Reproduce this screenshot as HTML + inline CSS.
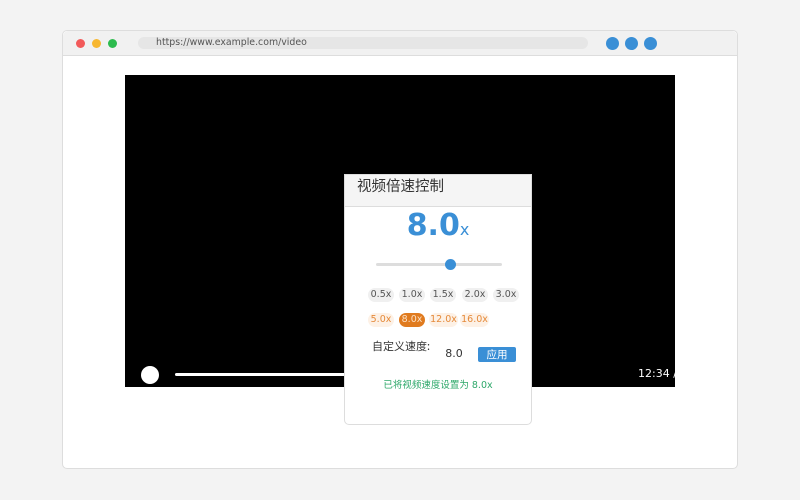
<!DOCTYPE html><html><head><meta charset="utf-8"><style>
*{margin:0;padding:0;box-sizing:border-box}
body{width:800px;height:500px;background:#f3f3f3;position:relative;font-family:"DejaVu Sans","Liberation Sans","Noto Sans CJK SC",sans-serif;overflow:hidden}
.a{position:absolute}
.btn{position:absolute;height:14px;line-height:14px;font-size:9.5px;border-radius:7px;text-align:center;background:#f0f0f0;color:#555;width:26px}
.o{background:#fdf1e6;color:#e58a3a}
</style></head><body>
<div class="a" style="left:62px;top:30px;width:676px;height:439px;background:#fff;border:1px solid #ddd;border-radius:5px"></div>
<div class="a" style="left:63px;top:31px;width:674px;height:25px;background:#f1f1f1;border-bottom:1px solid #ddd;border-radius:5px 5px 0 0"></div>
<div class="a" style="left:76px;top:39px;width:9px;height:9px;border-radius:50%;background:#f25a5a"></div>
<div class="a" style="left:92px;top:39px;width:9px;height:9px;border-radius:50%;background:#f7b731"></div>
<div class="a" style="left:108px;top:39px;width:9px;height:9px;border-radius:50%;background:#2dbb4e"></div>
<div class="a" style="left:138px;top:37px;width:450px;height:12px;background:#e6e6e6;border-radius:6px;font-size:9.4px;line-height:12px;color:#555;padding-left:18px">https://www.example.com/video</div>
<div class="a" style="left:606px;top:37px;width:13px;height:13px;border-radius:50%;background:#3a8fd6"></div>
<div class="a" style="left:625px;top:37px;width:13px;height:13px;border-radius:50%;background:#3a8fd6"></div>
<div class="a" style="left:644px;top:37px;width:13px;height:13px;border-radius:50%;background:#3a8fd6"></div>
<div class="a" style="left:125px;top:75px;width:550px;height:312px;background:#000;overflow:hidden">
<div class="a" style="left:16px;top:291px;width:18px;height:18px;border-radius:50%;background:#fff"></div>
<div class="a" style="left:50px;top:298px;width:200px;height:3px;background:#fff;border-radius:2px"></div>
<div class="a" style="left:513px;top:292px;color:#fff;font-size:11px;white-space:nowrap">12:34 / 45:00</div>
</div>
<div class="a" style="left:344px;top:174px;width:188px;height:251px;background:#fff;border:1px solid #ddd;border-radius:0 0 5px 5px">
<div class="a" style="left:0;top:0;width:186px;height:32px;background:#f5f5f5;border-bottom:1px solid #ddd;font-size:14.5px;color:#333;padding:0 0 0 12px;font-family:'Noto Sans CJK SC',sans-serif">视频倍速控制</div>
<div class="a" style="left:0;top:33px;width:186px;text-align:center;color:#3a8fd6;font-weight:bold;font-size:30px;font-family:'DejaVu Sans',sans-serif;white-space:nowrap">8.0<span style="font-weight:normal;font-size:16px">x</span></div>
<div class="a" style="left:31px;top:88px;width:126px;height:3px;background:#ddd;border-radius:2px"></div>
<div class="a" style="left:100px;top:84px;width:11px;height:11px;border-radius:50%;background:#3a8fd6"></div>
</div>
<div class="btn" style="left:368px;top:288px">0.5x</div>
<div class="btn" style="left:399px;top:288px">1.0x</div>
<div class="btn" style="left:430px;top:288px">1.5x</div>
<div class="btn" style="left:462px;top:288px">2.0x</div>
<div class="btn" style="left:493px;top:288px">3.0x</div>
<div class="btn o" style="left:368px;top:313px">5.0x</div>
<div class="btn" style="left:399px;top:313px;background:#e07b1f;color:#fce0c4">8.0x</div>
<div class="btn o" style="left:429px;top:313px;width:29px">12.0x</div>
<div class="btn o" style="left:460px;top:313px;width:29px">16.0x</div>
<div class="a" style="left:372px;top:338px;font-size:11px;color:#333;font-family:'Noto Sans CJK SC',sans-serif">自定义速度:</div>
<div class="a" style="left:437px;top:346px;width:34px;height:15px;font-size:11px;color:#333;text-align:center;line-height:15px">8.0</div>
<div class="a" style="left:478px;top:347px;width:38px;height:15px;background:#3a8fd6;color:#fff;font-size:10.5px;text-align:center;line-height:15px;border-radius:2px;font-family:'Noto Sans CJK SC',sans-serif">应用</div>
<div class="a" style="left:344px;top:377px;width:188px;text-align:center;font-size:9.5px;color:#2ea86a;font-family:'DejaVu Sans','Noto Sans CJK SC',sans-serif">已将视频速度设置为 8.0x</div>
</body></html>
